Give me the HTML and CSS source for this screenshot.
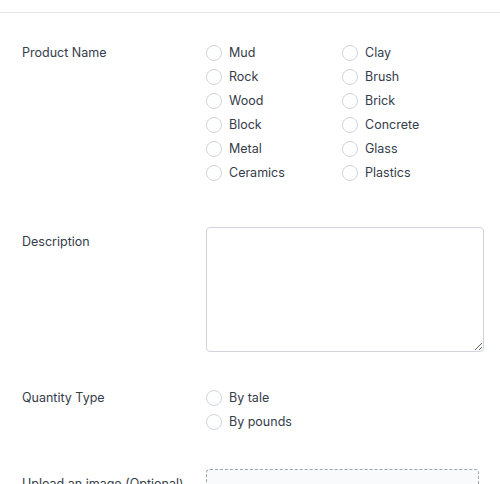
FILE: index.html
```html
<!DOCTYPE html>
<html>
<head>
<meta charset="utf-8">
<link rel="stylesheet" href="styles.css">
</head>
<body>
<div class="topbar"></div>
<form class="form">
  <div class="row row-product">
    <div class="label">Product Name</div>
    <div class="options two-col">
      <label class="opt"><span class="radio"></span>Mud</label>
      <label class="opt"><span class="radio"></span>Clay</label>
      <label class="opt"><span class="radio"></span>Rock</label>
      <label class="opt"><span class="radio"></span>Brush</label>
      <label class="opt"><span class="radio"></span>Wood</label>
      <label class="opt"><span class="radio"></span>Brick</label>
      <label class="opt"><span class="radio"></span>Block</label>
      <label class="opt"><span class="radio"></span>Concrete</label>
      <label class="opt"><span class="radio"></span>Metal</label>
      <label class="opt"><span class="radio"></span>Glass</label>
      <label class="opt"><span class="radio"></span>Ceramics</label>
      <label class="opt"><span class="radio"></span>Plastics</label>
    </div>
  </div>
  <div class="row row-desc">
    <div class="label label-pad">Description</div>
    <textarea class="textarea"></textarea>
  </div>
  <div class="row row-qty">
    <div class="label">Quantity Type</div>
    <div class="options">
      <label class="opt"><span class="radio"></span>By tale</label>
      <label class="opt"><span class="radio"></span>By pounds</label>
    </div>
  </div>
  <div class="row row-upload">
    <div class="label label-pad">Upload an image (Optional)</div>
    <div class="dropzone"></div>
  </div>
</form>
</body>
</html>
```

FILE: styles.css
```css
html, body {
  margin: 0;
  padding: 0;
  background: #ffffff;
}
body {
  font-family: Inter, "Noto Sans", sans-serif;
  font-size: 12.5px;
  color: #353c4a;
  overflow: hidden;
  height: 484px;
}
.topbar {
  height: 12px;
  border-bottom: 1px solid #e5e7eb;
}
.form {
  padding: 0 16px 0 22px;
}
.row {
  display: grid;
  grid-template-columns: 184px 1fr;
  align-items: start;
}
.row-product { margin-top: 28px; }
.row-desc { margin-top: 42px; }
.row-qty { margin-top: 34px; }
.row-upload { margin-top: 35px; }
.label {
  line-height: 24px;
  white-space: nowrap;
}
.label-pad {
  padding-top: 5px;
  line-height: 20px;
}
.options {
  display: grid;
  grid-template-columns: 136px;
}
.two-col {
  grid-template-columns: 136px 136px;
}
.opt {
  display: flex;
  align-items: center;
  height: 24px;
  line-height: 24px;
}
.radio {
  width: 14px;
  height: 14px;
  margin-top: -1px;
  border: 1px solid #d1d5db;
  border-radius: 50%;
  margin-right: 7px;
  flex: none;
}
.textarea {
  display: block;
  box-sizing: border-box;
  width: 278px;
  height: 125px;
  margin: 0;
  border: 1px solid #d1d5db;
  border-radius: 4px;
  background: #ffffff;
  resize: vertical;
  font: inherit;
}
.dropzone {
  box-sizing: border-box;
  width: 273px;
  height: 80px;
  border: 1px dashed #9ca3af;
  border-radius: 4px;
  background: #f9fafb;
}
```
